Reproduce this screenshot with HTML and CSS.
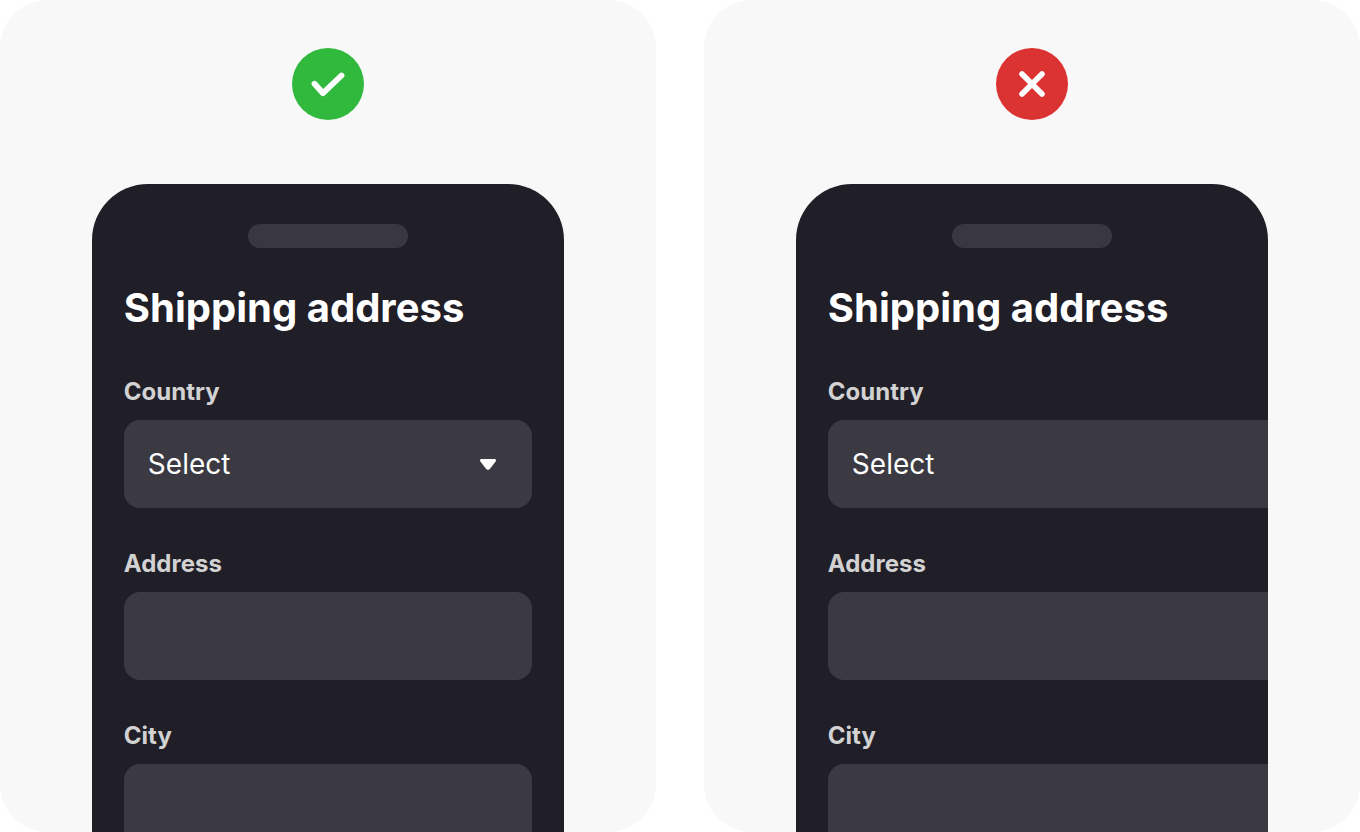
FILE: index.html
```html
<!DOCTYPE html>
<html lang="en">
<head>
<meta charset="utf-8">
<meta name="viewport" content="width=device-width, initial-scale=1">
<title>Shipping address</title>
<link rel="stylesheet" href="styles.css">
</head>
<body>
<main class="comparison">
  <section class="panel" aria-label="Do">
    <svg class="badge" viewBox="0 0 72 72" aria-hidden="true"><circle cx="36" cy="36" r="36" fill="#30b93d"/><path d="M22.500 35.700 31 45.200 49.500 27.500" fill="none" stroke="#fff" stroke-width="5.800" stroke-linecap="round" stroke-linejoin="round"/></svg>
    <form class="phone">
      <div class="speaker"></div>
      <h1 class="title">Shipping address</h1>
      <div class="field">
        <label class="label" for="country-a">Country</label>
        <div class="select-wrap">
          <select class="control" id="country-a"><option>Select</option></select>
          <svg class="arrow" viewBox="0 0 16 12" aria-hidden="true"><path d="M1.200 2H14.800V2.800L8.700 10.600H7.300L1.200 2.800Z" fill="#fff" stroke="#fff" stroke-width="2.200" stroke-linejoin="round"/></svg>
        </div>
      </div>
      <div class="field">
        <label class="label" for="address-a">Address</label>
        <input class="control" id="address-a" type="text">
      </div>
      <div class="field">
        <label class="label" for="city-a">City</label>
        <input class="control" id="city-a" type="text">
      </div>
    </form>
  </section>
  <section class="panel" aria-label="Don't">
    <svg class="badge" viewBox="0 0 72 72" aria-hidden="true"><circle cx="36" cy="36" r="36" fill="#db3332"/><path d="M26 26 46 46M46 26 26 46" fill="none" stroke="#fff" stroke-width="5.600" stroke-linecap="round"/></svg>
    <form class="phone phone-overflow">
      <div class="speaker"></div>
      <h1 class="title">Shipping address</h1>
      <div class="field">
        <label class="label" for="country-b">Country</label>
        <select class="control" id="country-b"><option>Select</option></select>
      </div>
      <div class="field">
        <label class="label" for="address-b">Address</label>
        <input class="control" id="address-b" type="text">
      </div>
      <div class="field">
        <label class="label" for="city-b">City</label>
        <input class="control" id="city-b" type="text">
      </div>
    </form>
  </section>
</main>
</body>
</html>
```
FILE: styles.css
```css
* { box-sizing: border-box; }

body {
  margin: 0;
  background: #fff;
  font-family: Inter, sans-serif;
}

.comparison {
  display: grid;
  grid-template-columns: 1fr 1fr;
  gap: 48px;
  height: 100vh;
}

.panel {
  display: flex;
  flex-direction: column;
  align-items: center;
  gap: 64px;
  min-width: 0;
  padding-top: 48px;
  overflow: hidden;
  border-radius: 48px;
  background: #f8f8f8;
}

.badge {
  flex: none;
  width: 72px;
  height: 72px;
}

.phone {
  flex: none;
  width: 72%;
  padding: 40px 32px;
  border-radius: 56px 56px 0 0;
  background: #201f28;
}

.speaker {
  width: 160px;
  height: 24px;
  margin: 0 auto 36px;
  border-radius: 12px;
  background: #393841;
}

.title {
  margin: 0 0 44px;
  color: #fff;
  font-size: 40px;
  font-weight: 700;
  line-height: 48px;
}

.field { margin-bottom: 40px; }

.label {
  display: block;
  margin-bottom: 12px;
  color: #d2d2d3;
  font-size: 24px;
  font-weight: 700;
  line-height: 32px;
}

.select-wrap { position: relative; }

.control {
  display: block;
  width: 100%;
  height: 88px;
  margin: 0;
  padding: 0 24px;
  border: 0;
  border-radius: 16px;
  background: rgba(255, 255, 255, 0.12);
  color: #fff;
  font-family: inherit;
  font-size: 28px;
  appearance: none;
}

.arrow {
  position: absolute;
  top: 38px;
  right: 36px;
  width: 16px;
  height: 12px;
  overflow: visible;
  pointer-events: none;
}

/* Fields run past the edge of the screen */
.phone-overflow .control { width: 150%; }
```
